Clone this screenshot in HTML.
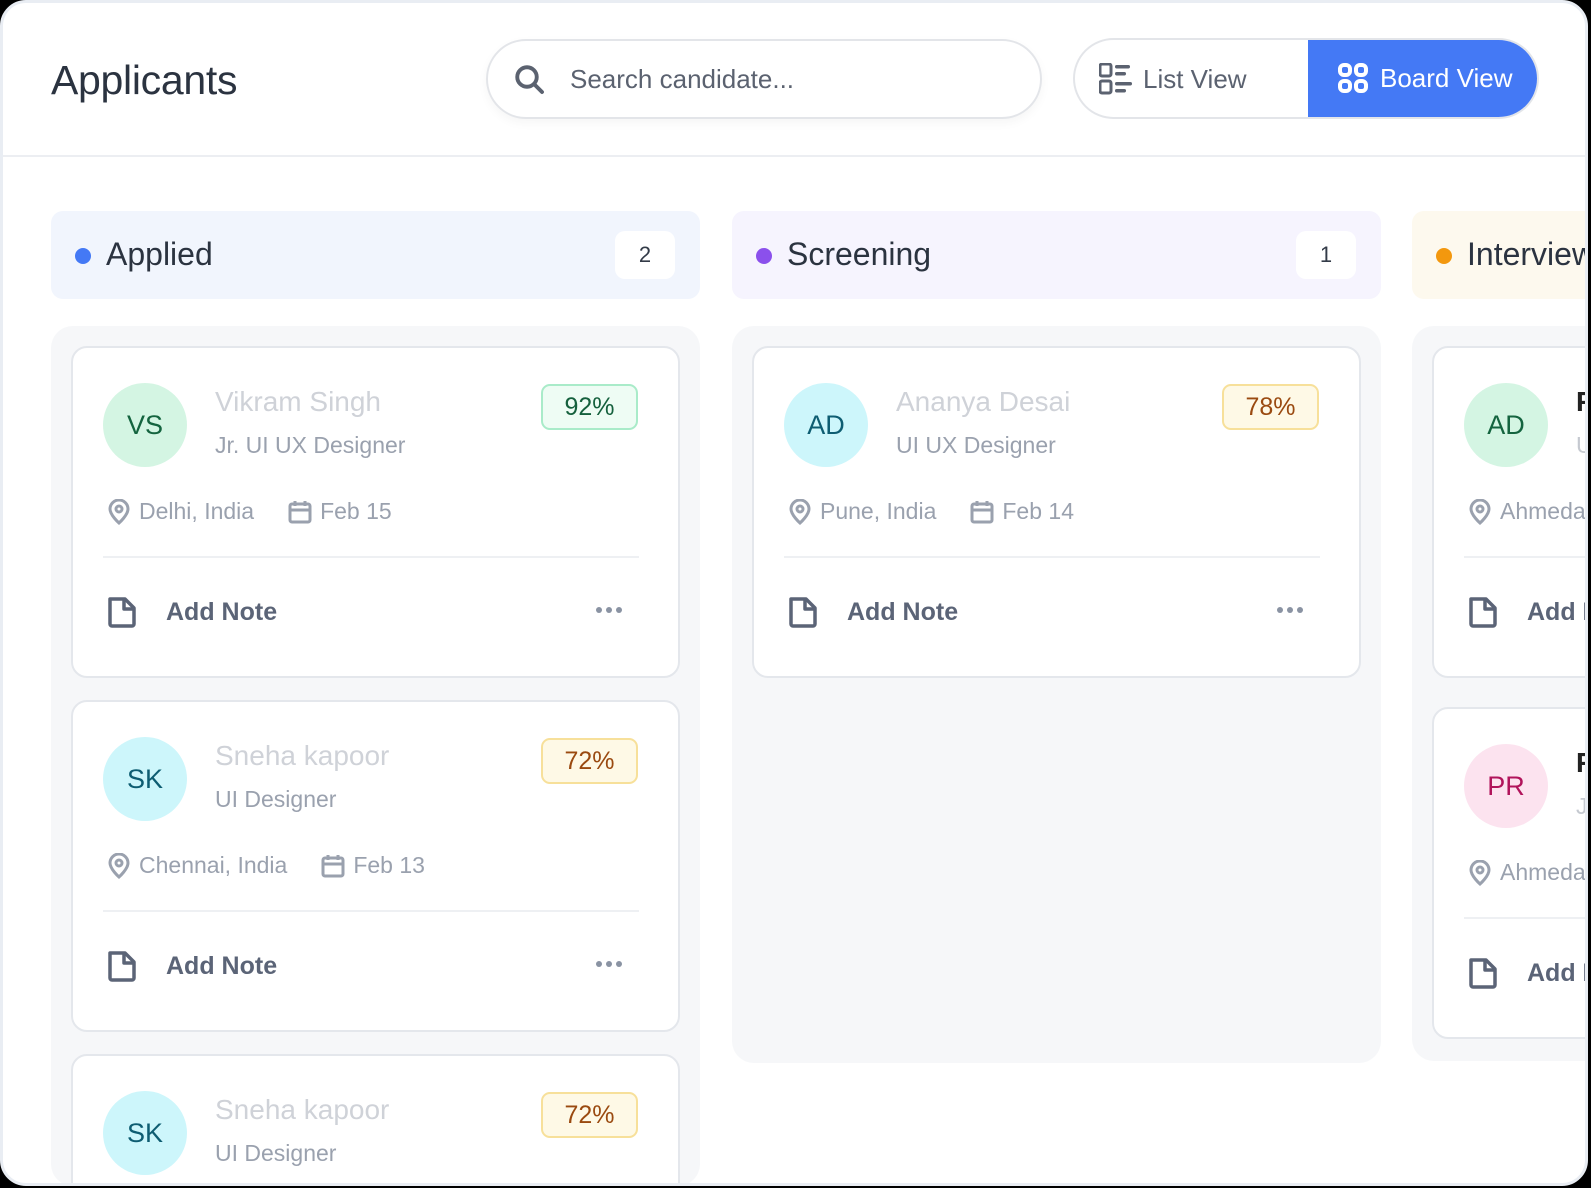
<!DOCTYPE html>
<html><head><meta charset="utf-8"><style>
*{box-sizing:border-box;margin:0;padding:0}
html,body{width:1591px;height:1188px;overflow:hidden;background:#000;font-family:"Liberation Sans",sans-serif}
#f{position:absolute;left:0;top:0;width:1588px;height:1186px;background:#fff;border-radius:26px;border:3px solid #e9edf3;overflow:hidden}
.a{position:absolute}
.title{left:48px;top:54px;font-size:41px;color:#2b3340;letter-spacing:-0.3px}
.hline{left:0;top:152px;width:1600px;height:2px;background:#eceef2}
.search{left:483px;top:36px;width:556px;height:80px;border:2px solid #e3e5e9;border-radius:40px;box-shadow:0 4px 10px rgba(0,0,0,0.04)}
.search span{position:absolute;left:82px;top:23px;font-size:26px;color:#5b6270}
.toggle{left:1070px;top:35px;width:466px;height:81px;border:2px solid #e3e5e9;border-radius:41px;overflow:hidden}
.toggle .bv{position:absolute;left:233px;top:-2px;width:235px;height:81px;background:#4479f5;border-radius:0 41px 41px 0;color:#fff}
.colh{top:208px;height:88px;width:649px;border-radius:12px}
.colh .dot{position:absolute;left:24px;top:37px;width:16px;height:16px;border-radius:50%}
.colh .t{position:absolute;left:55px;top:25px;font-size:32px;color:#2b3340}
.colh .n{position:absolute;right:25px;top:20px;width:60px;height:48px;background:#fff;border-radius:10px;text-align:center;line-height:48px;font-size:22px;color:#333b48}
.colb{top:323px;width:649px;background:#f6f7f9;border-radius:22px;overflow:hidden}
.card{position:absolute;left:20px;width:609px;height:332px;background:#fff;border:2px solid #e4e7ec;border-radius:16px}
.av{position:absolute;left:30px;top:35px;width:84px;height:84px;border-radius:50%;text-align:center;line-height:84px;font-size:27px}
.nm{position:absolute;left:142px;top:38px;font-size:28px;color:#cfd2d8;white-space:nowrap}
.rl{position:absolute;left:142px;top:84px;font-size:23px;color:#9aa1ae;white-space:nowrap}
.bd{position:absolute;left:468px;top:36px;width:97px;height:46px;border-radius:9px;text-align:center;line-height:42px;font-size:25px}
.loc{position:absolute;left:34px;top:150px;font-size:23px;color:#9aa1ae;white-space:nowrap;display:flex;align-items:center}
.loc svg{margin-right:8px}
.dv{position:absolute;left:30px;top:208px;width:536px;height:2px;background:#eef0f3}
.an{position:absolute;left:34px;top:248px;font-size:25px;font-weight:600;color:#5b6477;display:flex;align-items:center;white-space:nowrap}
.an span{margin-left:29px}
.dots{position:absolute;left:523px;top:259px;display:flex;gap:4px}
.dots i{width:6px;height:6px;border-radius:50%;background:#8a93a3;display:block}
.green{background:#d4f5e3;color:#14643f}
.cyan{background:#cdf6fb;color:#0e5d72}
.pink{background:#fce3ef;color:#b1145b}
.bg{background:#eefcf4;border:2px solid #a9ebc9;color:#15603d}
.by{background:#fef9e6;border:2px solid #f7e09a;color:#9a4a10}
</style></head><body><div id="f">
<div class="a title">Applicants</div>
<div class="a hline"></div>
<div class="a search"><svg class="a" style="left:24px;top:21px" width="36" height="36" viewBox="0 0 24 24" fill="none" stroke="#5b6270" stroke-width="2.6" stroke-linecap="round"><circle cx="10" cy="10" r="6.5"/><path d="M15 15l5 5"/></svg><span>Search candidate...</span></div>
<div class="a toggle">
<svg class="a" style="left:24px;top:23px" width="34" height="32" viewBox="0 0 34 32" fill="#5b6270"><rect x="1" y="1" width="11" height="12" rx="2" fill="none" stroke="#5b6270" stroke-width="3"/><rect x="1" y="18" width="11" height="12" rx="2" fill="none" stroke="#5b6270" stroke-width="3"/><rect x="16" y="2" width="15" height="3.5" rx="1.7"/><rect x="16" y="9" width="11" height="3.5" rx="1.7"/><rect x="16" y="19" width="17" height="3.5" rx="1.7"/><rect x="16" y="26" width="11" height="3.5" rx="1.7"/></svg>
<span class="a" style="left:68px;top:24px;font-size:26px;color:#5b6270">List View</span>
<div class="bv"><svg class="a" style="left:30px;top:25px" width="30" height="30" viewBox="0 0 30 30" fill="none" stroke="#fff" stroke-width="4"><rect x="2" y="2" width="10" height="10" rx="4"/><rect x="18" y="2" width="10" height="10" rx="4"/><rect x="2" y="18" width="10" height="10" rx="4"/><rect x="18" y="18" width="10" height="10" rx="4"/></svg><span class="a" style="left:72px;top:25px;font-size:26px">Board View</span></div>
</div>

<div class="a colh" style="left:48px;background:#f1f5fd"><div class="dot" style="background:#4479f5"></div><div class="t">Applied</div><div class="n">2</div></div>
<div class="a colh" style="left:729px;background:#f6f4fe"><div class="dot" style="background:#8b50ec"></div><div class="t">Screening</div><div class="n">1</div></div>
<div class="a colh" style="left:1409px;background:#fdf9ee"><div class="dot" style="background:#f3980e"></div><div class="t">Interview</div></div>

<div class="a colb" style="left:48px;height:860px">
<div class="card" style="top:20px">
<div class="av green">VS</div><div class="nm">Vikram Singh</div><div class="rl">Jr. UI UX Designer</div><div class="bd bg">92%</div>
<div class="loc"><svg width="24" height="26" viewBox="0 0 24 26" fill="none" stroke="#9aa1ae" stroke-width="3"><path d="M12 24s-9-8-9-14a9 9 0 0118 0c0 6-9 14-9 14z"/><circle cx="12" cy="10" r="3"/></svg>Delhi, India<svg style="margin-left:34px" width="24" height="24" viewBox="0 0 24 24" fill="none" stroke="#9aa1ae" stroke-width="3"><rect x="2" y="4" width="20" height="18" rx="2"/><path d="M2 10h20M7 1v5M17 1v5"/></svg>Feb 15</div>
<div class="dv"></div>
<div class="an"><svg width="30" height="32" viewBox="0 0 30 32" fill="none" stroke="#5b6477" stroke-width="3.5" stroke-linejoin="round"><path d="M3 3h15l9 9v16a2 2 0 01-2 2H5a2 2 0 01-2-2z"/><path d="M17 3v10h10"/></svg><span>Add Note</span></div>
<div class="dots"><i></i><i></i><i></i></div>
</div>
<div class="card" style="top:374px">
<div class="av cyan">SK</div><div class="nm">Sneha kapoor</div><div class="rl">UI Designer</div><div class="bd by">72%</div>
<div class="loc"><svg width="24" height="26" viewBox="0 0 24 26" fill="none" stroke="#9aa1ae" stroke-width="3"><path d="M12 24s-9-8-9-14a9 9 0 0118 0c0 6-9 14-9 14z"/><circle cx="12" cy="10" r="3"/></svg>Chennai, India<svg style="margin-left:34px" width="24" height="24" viewBox="0 0 24 24" fill="none" stroke="#9aa1ae" stroke-width="3"><rect x="2" y="4" width="20" height="18" rx="2"/><path d="M2 10h20M7 1v5M17 1v5"/></svg>Feb 13</div>
<div class="dv"></div>
<div class="an"><svg width="30" height="32" viewBox="0 0 30 32" fill="none" stroke="#5b6477" stroke-width="3.5" stroke-linejoin="round"><path d="M3 3h15l9 9v16a2 2 0 01-2 2H5a2 2 0 01-2-2z"/><path d="M17 3v10h10"/></svg><span>Add Note</span></div>
<div class="dots"><i></i><i></i><i></i></div>
</div>
<div class="card" style="top:728px">
<div class="av cyan">SK</div><div class="nm">Sneha kapoor</div><div class="rl">UI Designer</div><div class="bd by">72%</div>
</div>
</div>

<div class="a colb" style="left:729px;height:737px">
<div class="card" style="top:20px">
<div class="av cyan">AD</div><div class="nm">Ananya Desai</div><div class="rl">UI UX Designer</div><div class="bd by">78%</div>
<div class="loc"><svg width="24" height="26" viewBox="0 0 24 26" fill="none" stroke="#9aa1ae" stroke-width="3"><path d="M12 24s-9-8-9-14a9 9 0 0118 0c0 6-9 14-9 14z"/><circle cx="12" cy="10" r="3"/></svg>Pune, India<svg style="margin-left:34px" width="24" height="24" viewBox="0 0 24 24" fill="none" stroke="#9aa1ae" stroke-width="3"><rect x="2" y="4" width="20" height="18" rx="2"/><path d="M2 10h20M7 1v5M17 1v5"/></svg>Feb 14</div>
<div class="dv"></div>
<div class="an"><svg width="30" height="32" viewBox="0 0 30 32" fill="none" stroke="#5b6477" stroke-width="3.5" stroke-linejoin="round"><path d="M3 3h15l9 9v16a2 2 0 01-2 2H5a2 2 0 01-2-2z"/><path d="M17 3v10h10"/></svg><span>Add Note</span></div>
<div class="dots"><i></i><i></i><i></i></div>
</div>
</div>

<div class="a colb" style="left:1409px;height:735px">
<div class="card" style="top:20px">
<div class="av green">AD</div><div class="nm" style="color:#222;font-weight:bold">F</div><div class="rl" style="color:#c5c9d0">U</div>
<div class="loc"><svg width="24" height="26" viewBox="0 0 24 26" fill="none" stroke="#9aa1ae" stroke-width="3"><path d="M12 24s-9-8-9-14a9 9 0 0118 0c0 6-9 14-9 14z"/><circle cx="12" cy="10" r="3"/></svg>Ahmedabad</div>
<div class="dv"></div>
<div class="an"><svg width="30" height="32" viewBox="0 0 30 32" fill="none" stroke="#5b6477" stroke-width="3.5" stroke-linejoin="round"><path d="M3 3h15l9 9v16a2 2 0 01-2 2H5a2 2 0 01-2-2z"/><path d="M17 3v10h10"/></svg><span>Add Note</span></div>
</div>
<div class="card" style="top:381px">
<div class="av pink">PR</div><div class="nm" style="color:#222;font-weight:bold">F</div><div class="rl" style="color:#c5c9d0">J</div>
<div class="loc"><svg width="24" height="26" viewBox="0 0 24 26" fill="none" stroke="#9aa1ae" stroke-width="3"><path d="M12 24s-9-8-9-14a9 9 0 0118 0c0 6-9 14-9 14z"/><circle cx="12" cy="10" r="3"/></svg>Ahmedabad</div>
<div class="dv"></div>
<div class="an"><svg width="30" height="32" viewBox="0 0 30 32" fill="none" stroke="#5b6477" stroke-width="3.5" stroke-linejoin="round"><path d="M3 3h15l9 9v16a2 2 0 01-2 2H5a2 2 0 01-2-2z"/><path d="M17 3v10h10"/></svg><span>Add Note</span></div>
</div>
</div>
</div></body></html>
